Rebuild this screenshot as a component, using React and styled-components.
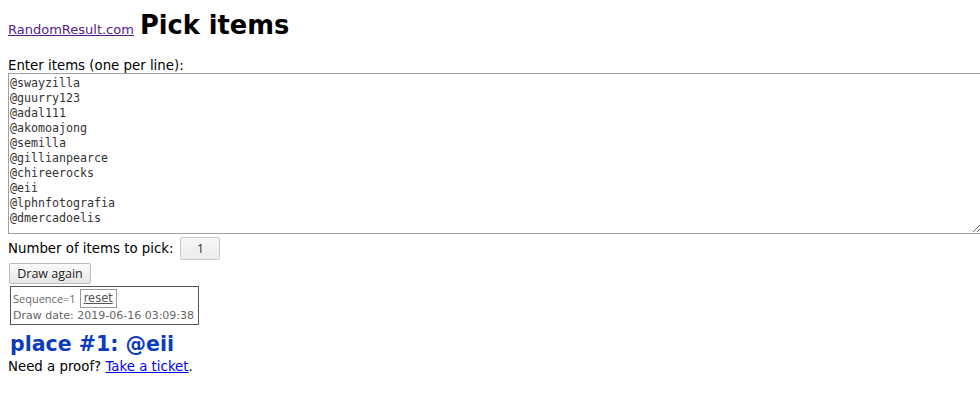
import React from "react";
import styled, { createGlobalStyle } from "styled-components";

const Global = createGlobalStyle`
  html { background: #fff; overflow-x: hidden; }
  body { margin: 8px 0 8px 8px; font-family: "DejaVu Sans", sans-serif; font-size: 13.33px; color: #000; }
`;

const Header = styled.div`
  display: flex;
  align-items: baseline;
  gap: 6px;
  margin-top: 2px;
  height: 36px;
`;

const SiteLink = styled.a`
  color: #551a8b;
  font-size: 13px;
  text-decoration: underline;
`;

const Title = styled.h1`
  margin: 0;
  font-size: 25.7px;
  font-weight: bold;
  line-height: 30px;
`;

const Label = styled.div`
  margin-top: 13px;
  line-height: 14px;
`;

const Area = styled.textarea`
  display: block;
  box-sizing: border-box;
  width: calc(100% + 2px);
  height: 161px;
  margin: 0;
  padding: 2px 1px;
  border: 1px solid #a0a0a0;
  font-family: "DejaVu Sans Mono", monospace;
  font-size: 11.65px;
  line-height: 15px;
  color: #333;
  resize: both;
  outline: none;
`;

const Row = styled.div`
  display: flex;
  align-items: center;
  gap: 7px;
  margin-top: 3px;
  height: 22px;
`;

const NumInput = styled.input`
  box-sizing: border-box;
  width: 40px;
  height: 23px;
  border: 1px solid #c8c8c8;
  border-radius: 2px;
  background: linear-gradient(#f6f6f6, #ececec);
  text-align: center;
  font-family: "Open Sans", sans-serif;
  font-size: 13px;
  color: #333;
  padding: 0;
`;

const Button = styled.button`
  display: block;
  box-sizing: border-box;
  margin: 4px 0 0 1px;
  height: 21px;
  width: 82px;
  border: 1px solid #bdbdbd;
  border-radius: 2px;
  background: linear-gradient(#fbfbfb, #e6e6e6);
  font-family: "Open Sans", sans-serif;
  font-size: 12.5px;
  color: #222;
  padding: 0;
`;

const SeqBox = styled.div`
  box-sizing: border-box;
  width: 189px;
  margin: 2px 0 0 2px;
  border: 1px solid #555;
  padding: 2px 2px 1px 2px;
  color: #666;
  font-size: 11px;
`;

const SeqLine = styled.div`
  display: flex;
  align-items: center;
  gap: 4px;
  height: 19px;
  font-family: "Open Sans", sans-serif;
`;

const ResetBtn = styled.span`
  border: 1px solid #999;
  padding: 1px 3px;
  font-family: "DejaVu Sans", sans-serif;
  font-size: 11.5px;
  text-decoration: underline;
  color: #555;
  line-height: 15px;
`;

const DateLine = styled.div`
  line-height: 15px;
`;

const Result = styled.div`
  margin: 6px 0 0 2px;
  font-size: 20.5px;
  font-weight: bold;
  color: #0b3bc0;
  line-height: 26px;
`;

const Proof = styled.div`
  margin-top: 2px;
  line-height: 15px;
`;

const TicketLink = styled.a`
  color: #0000ee;
  text-decoration: underline;
`;

const items = [
  "@swayzilla",
  "@guurry123",
  "@adal111",
  "@akomoajong",
  "@semilla",
  "@gillianpearce",
  "@chireerocks",
  "@eii",
  "@lphnfotografia",
  "@dmercadoelis",
].join("\n");

export default function App() {
  return (
    <>
      <Global />
      <Header>
        <SiteLink href="#">RandomResult.com</SiteLink>
        <Title>Pick items</Title>
      </Header>
      <Label>Enter items (one per line):</Label>
      <Area defaultValue={items} spellCheck={false} />
      <Row>
        <span>Number of items to pick:</span>
        <NumInput defaultValue="1" />
      </Row>
      <Button>Draw again</Button>
      <SeqBox>
        <SeqLine>
          Sequence=1 <ResetBtn>reset</ResetBtn>
        </SeqLine>
        <DateLine>Draw date: 2019-06-16 03:09:38</DateLine>
      </SeqBox>
      <Result>place #1: @eii</Result>
      <Proof>
        Need a proof? <TicketLink href="#">Take a ticket</TicketLink>.
      </Proof>
    </>
  );
}
